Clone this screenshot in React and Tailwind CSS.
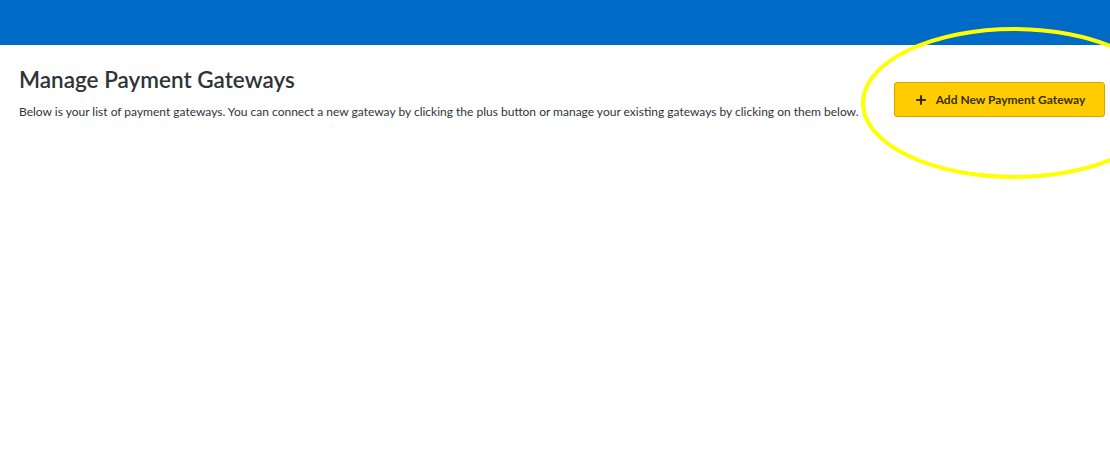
import { Plus } from 'lucide-react';

export default function App() {
  return (
    <div className="relative min-h-[462px] bg-white overflow-hidden" style={{ fontFamily: 'Lato, "Open Sans", sans-serif' }}>
      {/* Top bar */}
      <div className="h-[45px] bg-[#006bc6]" />

      <div className="flex items-start justify-between pl-[19px] pr-[5px] pt-[21px]">
        <div>
          <h1 className="text-[22.5px] leading-[27px] font-semibold text-[#2e3438]">Manage Payment Gateways</h1>
          <p className="mt-[11px] text-[12px] leading-[15px] text-[#2e3438]">
            Below is your list of payment gateways. You can connect a new gateway by clicking the plus button or manage your existing gateways by clicking on them below.
          </p>
        </div>
        <button className="mt-[16px] w-[211px] h-[35px] flex items-center justify-center gap-[8px] bg-[#ffcc00] border border-[#d9a300] rounded-[3px] text-[12px] font-bold text-[#3a2c00]">
          <Plus className="w-[14px] h-[14px]" strokeWidth={3.5} />
          Add New Payment Gateway
        </button>
      </div>

      {/* Annotation */}
      <svg className="absolute left-0 top-0 pointer-events-none" width="1110" height="462">
        <ellipse cx="1014" cy="103" rx="151" ry="74" fill="none" stroke="#ffff00" strokeWidth="4" />
      </svg>
    </div>
  );
}
